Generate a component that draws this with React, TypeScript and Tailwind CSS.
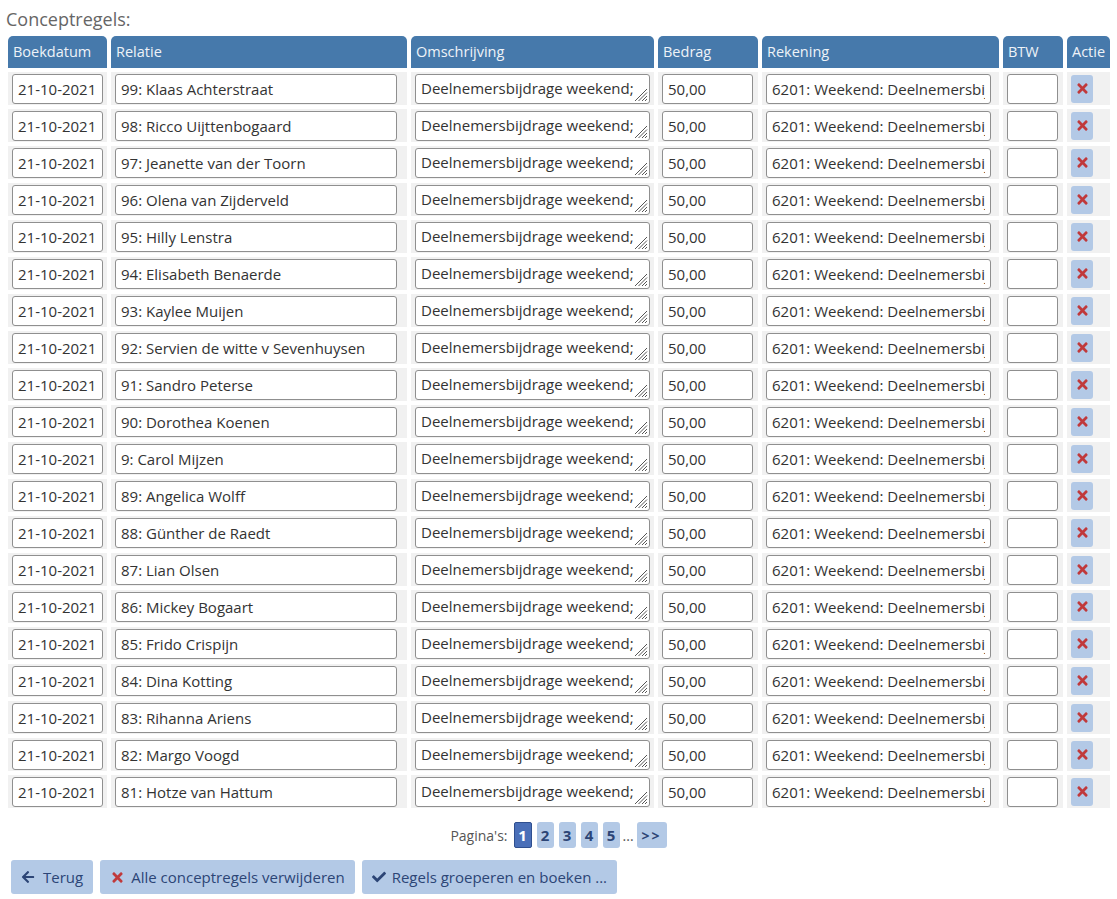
import React from "react";
import { FaTimes, FaArrowLeft, FaCheck } from "react-icons/fa";

const names = [
    "99: Klaas Achterstraat",
    "98: Ricco Uijttenbogaard",
    "97: Jeanette van der Toorn",
    "96: Olena van Zijderveld",
    "95: Hilly Lenstra",
    "94: Elisabeth Benaerde",
    "93: Kaylee Muijen",
    "92: Servien de witte v Sevenhuysen",
    "91: Sandro Peterse",
    "90: Dorothea Koenen",
    "9: Carol Mijzen",
    "89: Angelica Wolff",
    "88: Günther de Raedt",
    "87: Lian Olsen",
    "86: Mickey Bogaart",
    "85: Frido Crispijn",
    "84: Dina Kotting",
    "83: Rihanna Ariens",
    "82: Margo Voogd",
    "81: Hotze van Hattum",
];

const headers = [
    { label: "Boekdatum", w: "w-[98px]" },
    { label: "Relatie", w: "w-[296px]" },
    { label: "Omschrijving", w: "w-[243px]" },
    { label: "Bedrag", w: "w-[100px]" },
    { label: "Rekening", w: "w-[237px]" },
    { label: "BTW", w: "w-[60px]" },
    { label: "Actie", w: "w-[43px]" },
];

const inputCls =
    "h-[30px] bg-white border border-[#8f8f8f] rounded-[3px] px-[5px] text-[15px] text-[#333] outline-none";

const Grip = () => (
    <svg className="absolute right-[1px] bottom-[1px]" width="15" height="15" viewBox="0 0 15 15">
        <path d="M14 2 L2 14 M14 5.5 L5.5 14 M14 9 L9 14 M14 12 L12 14" stroke="#555" strokeWidth="1" />
    </svg>
);

const App = () => {
    return (
        <div className="w-[1117px] h-[899px] bg-white font-['Segoe_UI','Open_Sans',sans-serif] text-[#333] overflow-hidden">
            <div className="pl-[6px] pt-[6px] text-[18px] text-[#666] leading-[26px]">Conceptregels:</div>
            <table className="ml-[4px] border-separate border-spacing-[4px] table-fixed">
                <thead>
                    <tr>
                        {headers.map(({ label, w }) => (
                            <th
                                key={label}
                                className={`${w} h-[32px] bg-[#4679ab] text-[#eef3f8] font-normal text-left text-[14.5px] px-[5px] rounded-t-[5px]`}
                            >
                                {label}
                            </th>
                        ))}
                    </tr>
                </thead>
                <tbody>
                    {names.map((name) => (
                        <tr key={name}>
                            <td className="bg-[#f1f1f1] h-[33px] px-[4px]">
                                <input readOnly value="21-10-2021" className={`${inputCls} w-[91px] px-[4px]`} />
                            </td>
                            <td className="bg-[#f1f1f1] pl-[4px]">
                                <input readOnly value={name} className={`${inputCls} w-[282px]`} />
                            </td>
                            <td className="bg-[#f1f1f1] pl-[4px]">
                                <div className={`${inputCls} w-[235px] relative flex items-center whitespace-nowrap pr-[12px]`}>
                                    <span>Deelnemersbijdrage weekend;</span>
                                    <Grip />
                                </div>
                            </td>
                            <td className="bg-[#f1f1f1] pl-[4px]">
                                <input readOnly value="50,00" className={`${inputCls} w-[91px]`} />
                            </td>
                            <td className="bg-[#f1f1f1] pl-[4px]">
                                <input readOnly value="6201: Weekend: Deelnemersbijdrage" className={`${inputCls} w-[225px]`} />
                            </td>
                            <td className="bg-[#f1f1f1] pl-[4px]">
                                <input readOnly value="" className={`${inputCls} w-[51px]`} />
                            </td>
                            <td className="bg-[#f1f1f1] pl-[4px]">
                                <button className="w-[22px] h-[28px] bg-[#b3c9e6] rounded-[3px] flex items-center justify-center">
                                    <FaTimes className="text-[#c0393b] text-[15px]" />
                                </button>
                            </td>
                        </tr>
                    ))}
                </tbody>
            </table>
            <div className="flex items-center justify-center mt-[10px] gap-[5px] text-[14px]">
                <span className="text-[#555] mr-[1px]">Pagina's:</span>
                <span className="w-[18px] h-[26px] flex items-center justify-center bg-[#4a6fb8] border border-[#2f4f8f] text-white font-bold rounded-[2px] text-[15px]">1</span>
                {["2", "3", "4", "5"].map((p) => (
                    <span key={p} className="w-[17px] h-[26px] flex items-center justify-center bg-[#b3c9e6] text-[#2c4576] font-bold rounded-[3px] text-[15px]">{p}</span>
                ))}
                <span className="text-[#555] -mx-[2px]">...</span>
                <span className="w-[30px] h-[26px] flex items-center justify-center bg-[#b3c9e6] text-[#2c4576] font-bold rounded-[3px] tracking-[2px]">&gt;&gt;</span>
            </div>
            <div className="flex gap-[7px] ml-[11px] mt-[12px]">
                <button className="h-[34px] px-[10px] bg-[#b3c9e6] text-[#2c4576] text-[15px] rounded-[3px] flex items-center gap-[8px]">
                    <FaArrowLeft className="text-[14px]" /> Terug
                </button>
                <button className="h-[34px] px-[10px] bg-[#b3c9e6] text-[#2c4576] text-[15px] rounded-[3px] flex items-center gap-[6px]">
                    <FaTimes className="text-[#c0393b] text-[15px]" /> Alle conceptregels verwijderen
                </button>
                <button className="h-[34px] px-[10px] bg-[#b3c9e6] text-[#2c4576] text-[15px] rounded-[3px] flex items-center gap-[6px]">
                    <FaCheck className="text-[14px]" /> Regels groeperen en boeken ...
                </button>
            </div>
        </div>
    );
};

export default App;
